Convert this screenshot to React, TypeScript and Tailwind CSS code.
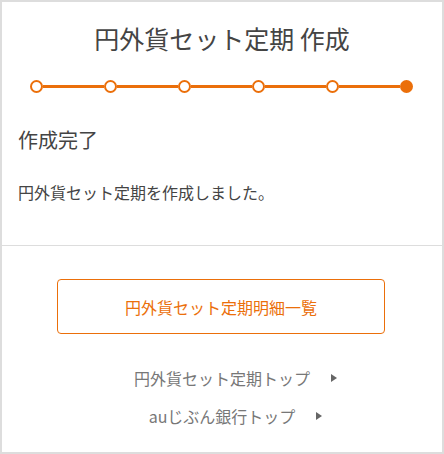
const steps = [false, false, false, false, false, true];

const links = ["円外貨セット定期トップ", "auじぶん銀行トップ"];

function StepBar() {
  return (
    <div className="ml-[28px] flex w-[383px] items-center">
      {steps.map((done, i) => (
        <div className="flex items-center" key={i}>
          {i > 0 ? <span className="h-[3px] w-[61px] bg-[#eb6f0a]" /> : null}
          <span
            className={
              done
                ? "block h-[13px] w-[13px] rounded-full bg-[#eb6f0a]"
                : "block h-[13px] w-[13px] rounded-full border-2 border-[#eb6f0a] bg-white"
            }
          />
        </div>
      ))}
    </div>
  );
}

export default function App() {
  return (
    <div
      className="h-[454px] w-[444px] border-2 border-[#dddddd] bg-white text-[#444]"
      style={{ fontFamily: '"Noto Sans CJK JP", "Noto Sans", sans-serif' }}
    >
      <h1 className="pt-[18px] text-center text-[25px] leading-[36px] font-normal">
        円外貨セット定期 作成
      </h1>
      <div className="mt-[24px]">
        <StepBar />
      </div>
      <section className="px-[16px]">
        <h2 className="mt-[32px] text-[20px] leading-[30px] font-normal">作成完了</h2>
        <p className="mt-[25px] text-[16px] leading-[24px]">円外貨セット定期を作成しました。</p>
      </section>
      <div className="mt-[41px] h-px bg-[#dddddd]" />
      <div className="pt-[33px]">
        <button className="ml-[55px] flex h-[55px] w-[328px] items-center justify-center rounded-[4px] border border-[#eb6f0a] text-[16px] text-[#eb6f0a]">
          円外貨セット定期明細一覧
        </button>
      </div>
      <ul className="mt-[32px] flex flex-col gap-[14px]">
        {links.map((label) => (
          <li className="flex justify-center" key={label}>
            <a className="relative text-[16px] leading-[24px] text-[#777]" href="#">
              {label}
              <span className="absolute top-1/2 right-[-27px] h-0 w-0 -translate-y-1/2 border-y-[4px] border-l-[6px] border-y-transparent border-l-[#666]" />
            </a>
          </li>
        ))}
      </ul>
    </div>
  );
}
